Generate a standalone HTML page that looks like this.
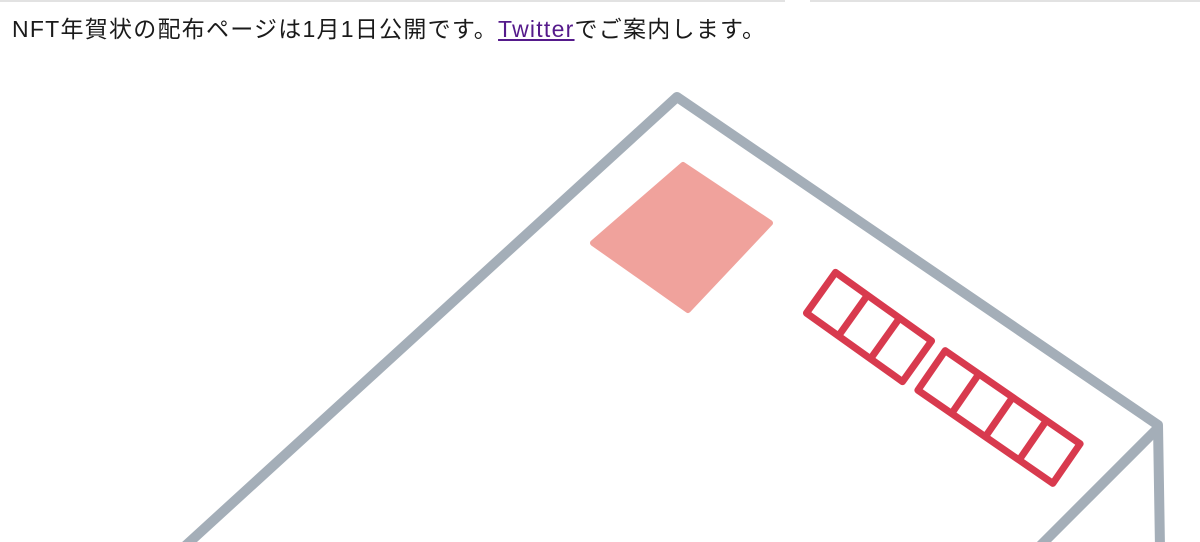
<!DOCTYPE html>
<html><head><meta charset="utf-8"><style>
html,body{margin:0;padding:0;background:#fff;width:1200px;height:542px;overflow:hidden;position:relative}
.top{position:absolute;left:0;top:0;height:2px;background:#e2e2e2}
p{position:absolute;left:12px;top:14px;margin:0;font:23px/30px "Liberation Sans","Noto Sans CJK JP",sans-serif;letter-spacing:1.25px;color:#1a1a1a;white-space:nowrap}
a{color:#551a8b;text-decoration:underline}
svg{position:absolute;left:0;top:0}
</style></head><body>
<div class="top" style="width:785px"></div>
<div class="top" style="left:810px;width:390px"></div>
<p>NFT年賀状の配布ページは1月1日公開です。<a>Twitter</a>でご案内します。</p>
<svg width="1200" height="542" viewBox="0 0 1200 542">
<g fill="none" stroke="#a4aeb8" stroke-width="10" stroke-linecap="round" stroke-linejoin="round">
<path d="M183 548 L677 97 L1158 425 L1160 548"/>
<path d="M1158 428 L1038 548"/>
</g>
<path d="M683 165 L770 223 L688 310 L593 243 Z" fill="#f0a29c" stroke="#f0a29c" stroke-width="6" stroke-linejoin="round"/>
<g fill="none" stroke="#d83a4e" stroke-width="7" stroke-linejoin="round">
<g transform="translate(869 327) rotate(35.5)">
<rect x="-59" y="-25" width="118" height="50"/>
<line x1="-19.7" y1="-25" x2="-19.7" y2="25"/>
<line x1="19.7" y1="-25" x2="19.7" y2="25"/>
</g>
<g transform="translate(999 417) rotate(34.6)">
<rect x="-82" y="-24" width="164" height="48"/>
<line x1="-41" y1="-24" x2="-41" y2="24"/>
<line x1="0" y1="-24" x2="0" y2="24"/>
<line x1="41" y1="-24" x2="41" y2="24"/>
</g>
</g>
</svg>
</body></html>
